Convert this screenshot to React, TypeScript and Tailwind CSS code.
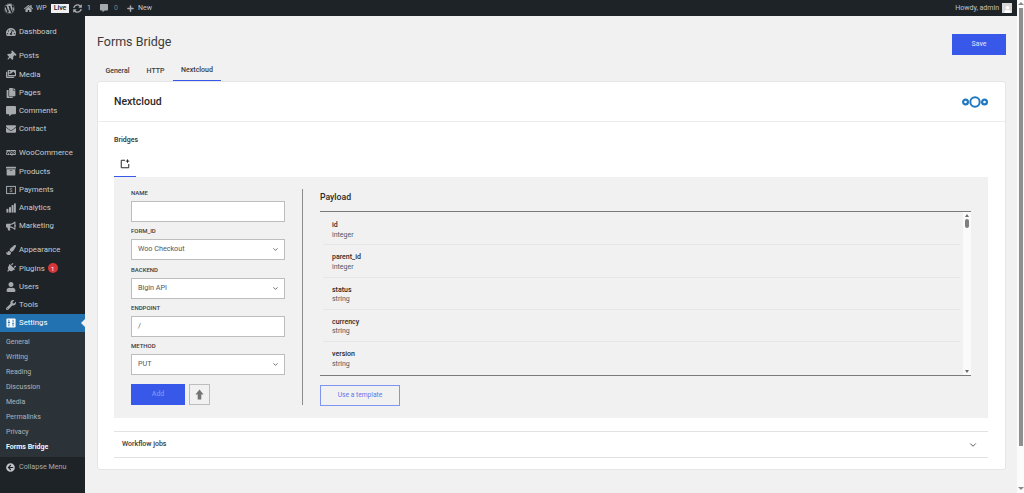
import React from 'react';
import { ChevronDown, Plus } from 'lucide-react';
import {
  FaWordpress, FaHome, FaSyncAlt, FaCommentAlt, FaTachometerAlt, FaThumbtack, FaImages, FaCopy,
  FaEnvelope, FaArchive, FaBullhorn, FaPaintBrush, FaPlug, FaUser, FaWrench,
  FaArrowCircleLeft,
} from 'react-icons/fa';
import { SiWoo } from 'react-icons/si';

type IconProps = { className?: string };

const DollarIcon = ({ className }: IconProps) => (
  <svg viewBox="0 0 12 12" className={className} fill="none" stroke="currentColor">
    <rect x="0.7" y="1.7" width="10.6" height="8.6" strokeWidth="1.2" />
    <text x="6" y="8.7" textAnchor="middle" fontSize="7" fill="currentColor" stroke="none">$</text>
  </svg>
);

const BarsIcon = ({ className }: IconProps) => (
  <svg viewBox="0 0 12 12" className={className} fill="currentColor">
    <rect x="0.5" y="7" width="2.4" height="4.5" />
    <rect x="3.6" y="5" width="2.4" height="6.5" />
    <rect x="6.7" y="2.5" width="2.4" height="9" />
    <rect x="9.6" y="0.5" width="2.2" height="11" />
  </svg>
);

const SettingsIcon = ({ className }: IconProps) => (
  <svg viewBox="0 0 12 12" className={className}>
    <rect x="0.5" y="0.5" width="11" height="11" rx="1.2" fill="currentColor" />
    <path d="M3.5 2v2M3.5 6.5V10M8.5 2v3.5M8.5 8v2" stroke="#2271b1" strokeWidth="1.1" />
    <path d="M2.2 5.2h2.6M7.2 6.8h2.6" stroke="#2271b1" strokeWidth="1.3" />
  </svg>
);

const PinIcon = ({ className }: IconProps) => <FaThumbtack className={`${className} rotate-45`} />;
const PlugIcon = ({ className }: IconProps) => <FaPlug className={`${className} rotate-45`} />;

type MenuItem = { label: string; icon: React.ComponentType<IconProps>; badge?: string };

const groups: MenuItem[][] = [
  [{ label: 'Dashboard', icon: FaTachometerAlt }],
  [
    { label: 'Posts', icon: PinIcon },
    { label: 'Media', icon: FaImages },
    { label: 'Pages', icon: FaCopy },
    { label: 'Comments', icon: FaCommentAlt },
    { label: 'Contact', icon: FaEnvelope },
  ],
  [
    { label: 'WooCommerce', icon: SiWoo },
    { label: 'Products', icon: FaArchive },
    { label: 'Payments', icon: DollarIcon },
    { label: 'Analytics', icon: BarsIcon },
    { label: 'Marketing', icon: FaBullhorn },
  ],
  [
    { label: 'Appearance', icon: FaPaintBrush },
    { label: 'Plugins', icon: PlugIcon, badge: '1' },
    { label: 'Users', icon: FaUser },
    { label: 'Tools', icon: FaWrench },
  ],
];

const submenu = ['General', 'Writing', 'Reading', 'Discussion', 'Media', 'Permalinks', 'Privacy', 'Forms Bridge'];

const schema = [
  { name: 'id', type: 'integer' },
  { name: 'parent_id', type: 'integer' },
  { name: 'status', type: 'string' },
  { name: 'currency', type: 'string' },
  { name: 'version', type: 'string' },
];

const AdminBar = () => (
  <div className="h-4 shrink-0 bg-[#1d2327] flex items-center text-[#c3c4c7] text-[7px] pl-[4px] pr-[5px]">
    <FaWordpress className="w-[11px] h-[11px] text-[#a7aaad]" />
    <FaHome className="w-[9px] h-[9px] ml-[9px] text-[#a7aaad]" />
    <span className="ml-[3px] w-[11px]">WP</span>
    <span className="ml-[4px] w-[18px] text-center bg-[#f0f0f1] text-[#1d2327] font-medium leading-[9px]">Live</span>
    <FaSyncAlt className="w-[9px] h-[9px] ml-[4px] text-[#a7aaad]" />
    <span className="ml-[5px] w-[3px]">1</span>
    <FaCommentAlt className="w-[8px] h-[8px] ml-[10px] text-[#a7aaad]" />
    <span className="ml-[6px] w-[4px] text-[#787c82]">0</span>
    <Plus className="w-[9px] h-[9px] ml-[8px] text-[#a7aaad]" strokeWidth={4} />
    <span className="ml-[3px]">New</span>
    <span className="ml-auto">Howdy, admin</span>
    <span className="ml-[3px] w-[10px] h-[10px] bg-[#d8d8d8] flex items-end justify-center overflow-hidden">
      <FaUser className="w-[7px] h-[7px] text-white" />
    </span>
  </div>
);

const Sidebar = () => (
  <aside className="w-[85px] shrink-0 bg-[#1d2327] flex flex-col pt-[7px] text-[7.8px] text-[#c9cbcd]">
    {groups.map((group, i) => (
      <div key={i} className="mb-[6px]">
        {group.map(({ label, icon: Icon, badge }) => (
          <div key={label} className="h-[18.2px] flex items-center pl-[5px]">
            <span className="w-[11px] flex justify-center">
              <Icon className="w-[10px] h-[10px] text-[#a7aaad]" />
            </span>
            <span className="ml-[3px]">{label}</span>
            {badge && (
              <span className="ml-[3px] w-[10px] h-[10px] rounded-full bg-[#d63638] text-white text-[6px] flex items-center justify-center">
                {badge}
              </span>
            )}
          </div>
        ))}
      </div>
    ))}
    <div className="-mt-[6px] h-[18.2px] bg-[#2271b1] text-white flex items-center pl-[5px] relative">
      <span className="w-[11px] flex justify-center">
        <SettingsIcon className="w-[10px] h-[10px]" />
      </span>
      <span className="ml-[3px]">Settings</span>
      <span className="absolute right-0 top-[5px] border-y-[4px] border-y-transparent border-r-[4px] border-r-[#f1f1f1]" />
    </div>
    <div className="bg-[#2c3338] py-[2.5px] text-[7px] text-[#b0b4b8]">
      {submenu.map((s) => (
        <div key={s} className={`h-[15px] flex items-center pl-[6px] ${s === 'Forms Bridge' ? 'text-white font-semibold' : ''}`}>
          {s}
        </div>
      ))}
    </div>
    <div className="flex items-center pl-[5px] h-[20px] mt-[0.5px] text-[#a7aaad] text-[7.2px]">
      <span className="w-[11px] flex justify-center">
        <FaArrowCircleLeft className="w-[9px] h-[9px] text-[#c3c4c7]" />
      </span>
      <span className="ml-[3px]">Collapse Menu</span>
    </div>
  </aside>
);

const Label = ({ children }: { children: React.ReactNode }) => (
  <div className="h-[9px] mb-[4px] flex items-center text-[6px] font-medium text-[#3a3a3a]">{children}</div>
);

const TextField = ({ label, value }: { label: string; value?: string }) => (
  <div className="mb-[4.25px]">
    <Label>{label}</Label>
    <div className="h-[21px] bg-white border border-[#bdbdbd] flex items-center px-[6px] text-[7.2px] text-[#50575e]">{value}</div>
  </div>
);

const SelectField = ({ label, value }: { label: string; value: string }) => (
  <div className="mb-[4.25px]">
    <Label>{label}</Label>
    <div className="h-[21px] bg-white border border-[#bdbdbd] flex items-center justify-between pl-[6px] pr-[5px] text-[7.2px] text-[#50575e]">
      {value}
      <ChevronDown className="w-[7px] h-[7px] text-[#3a3a3a]" strokeWidth={2.5} />
    </div>
  </div>
);

const NextcloudLogo = () => (
  <svg viewBox="0 0 26 12" className="w-[26px] h-[12px]" fill="none" stroke="#1f78c1">
    <circle cx="3.5" cy="6" r="2.4" strokeWidth="2.2" />
    <circle cx="13" cy="6" r="4.7" strokeWidth="2" />
    <circle cx="22.5" cy="6" r="2.4" strokeWidth="2.2" />
  </svg>
);

const AddIcon = () => (
  <svg viewBox="0 0 12 12" className="w-[10px] h-[10px]" fill="none" stroke="#2a2a2a" strokeWidth="1.2">
    <path d="M6 1.5H1.5v9h9V6" />
    <path d="M9 0.5v4M7 2.5h4" />
  </svg>
);

const ArrowIcon = () => (
  <svg viewBox="0 0 10 12" className="w-[9px] h-[11px]" fill="#757575">
    <path d="M5 0.5 9.5 6H7v5.5H3V6H0.5Z" />
  </svg>
);

const PageScrollbar = () => (
  <div className="w-[7px] shrink-0 bg-[#fbfbfb] flex flex-col items-center">
    <span className="mt-[2px] border-x-[3px] border-x-transparent border-b-[3px] border-b-[#8a8a8a]" />
    <span className="mt-[3px] w-[4px] h-[438px] bg-[#8f8f8f]" />
    <span className="mt-auto mb-[3px] border-x-[3px] border-x-transparent border-t-[3px] border-t-[#8a8a8a]" />
  </div>
);

export default function App() {
  return (
    <div className="w-[1024px] h-[493px] overflow-hidden flex bg-[#f1f1f1] font-['Roboto',sans-serif]">
      <div className="flex-1 min-w-0 flex flex-col">
        <AdminBar />
        <div className="flex flex-1 min-h-0">
          <Sidebar />
          <main className="flex-1 pl-[12px] pr-[11px]">
            <div className="flex items-start justify-between pt-[18px] h-[45px]">
              <h1 className="text-[12.5px] leading-[16px] text-[#3c3c3c]">Forms Bridge</h1>
              <button className="w-[54px] h-[21px] bg-[#3858e9] text-[#ccd4fa] text-[7px] font-medium">Save</button>
            </div>
            <nav className="h-[20px] flex text-[7px] font-medium text-[#3a3a3a]">
              <span className="w-[41px] flex items-center justify-center">General</span>
              <span className="w-[35px] flex items-center justify-center">HTTP</span>
              <span className="w-[48px] flex items-center justify-center border-b-[1.5px] border-[#3858e9]">Nextcloud</span>
            </nav>
            <section className="h-[389px] bg-white rounded-[3px] border border-[#e6e6e6]">
              <header className="h-[40px] flex items-center justify-between px-[16px] pr-[17px] border-b border-[#ececec]">
                <h2 className="text-[10.5px] font-medium text-[#2a2a2a]">Nextcloud</h2>
                <NextcloudLogo />
              </header>
              <div className="px-[16px] pr-[17px]">
                <div className="text-[7px] font-semibold text-[#3a3a3a] mt-[14px] leading-[9px]">Bridges</div>
                <div className="mt-[7px] w-[22px] h-[25px] flex items-center justify-center border-b-[1.5px] border-[#3858e9]">
                  <AddIcon />
                </div>
                <div className="bg-[#f1f1f1] h-[241px] pl-[17px] pr-[17px] pt-[11px] flex">
                  <div className="w-[154px] shrink-0">
                    <TextField label="NAME" />
                    <SelectField label="FORM_ID" value="Woo Checkout" />
                    <SelectField label="BACKEND" value="Bigin API" />
                    <TextField label="ENDPOINT" value="/" />
                    <SelectField label="METHOD" value="PUT" />
                    <div className="flex gap-[4px] mt-[9px]">
                      <button className="w-[54px] h-[21px] bg-[#3858e9] text-[#7a90f0] text-[7px] font-medium">Add</button>
                      <button className="w-[21px] h-[21px] border border-[#bdbdbd] flex items-center justify-center">
                        <ArrowIcon />
                      </button>
                    </div>
                  </div>
                  <div className="w-px h-[216px] mt-[1px] bg-[#8c8c8c] mx-[17px] shrink-0" />
                  <div className="flex-1 flex flex-col">
                    <div className="text-[8.7px] font-medium text-[#2a2a2a] leading-[12px] mt-[3px]">Payload</div>
                    <div className="mt-[8px] h-[165px] border-y border-[#7a7a7a] flex">
                      <div className="flex-1 overflow-hidden px-[3px] pt-[1px]">
                        {schema.map((f) => (
                          <div key={f.name} className="h-[32.3px] pl-[9px] pt-[8px] border-b border-[#e6e6e6] last:border-b-0 text-[7px] leading-[9.5px]">
                            <div className="font-medium text-[#2a2a2a]">{f.name}</div>
                            <div className="text-[#50575e]">{f.type}</div>
                          </div>
                        ))}
                      </div>
                      <div className="w-[8px] bg-[#fafafa] flex flex-col items-center">
                        <span className="mt-[2px] border-x-[2px] border-x-transparent border-b-[3px] border-b-[#6b6b6b]" />
                        <span className="mt-[2px] w-[4px] h-[9px] rounded-full bg-[#7f7f7f]" />
                        <span className="mt-auto mb-[2px] border-x-[2px] border-x-transparent border-t-[3px] border-t-[#6b6b6b]" />
                      </div>
                    </div>
                    <button className="mt-[9px] w-[80px] h-[21px] border border-[#7f95f0] text-[#5f78ec] text-[6.7px]">Use a template</button>
                  </div>
                </div>
                <div className="mt-[13px] h-[27px] border-y border-[#e2e2e2] flex items-center justify-between pl-[8px] pr-[10px] text-[7px] font-medium text-[#3a3a3a]">
                  Workflow jobs
                  <ChevronDown className="w-[10px] h-[10px]" strokeWidth={2} />
                </div>
              </div>
            </section>
          </main>
        </div>
      </div>
      <PageScrollbar />
    </div>
  );
}
